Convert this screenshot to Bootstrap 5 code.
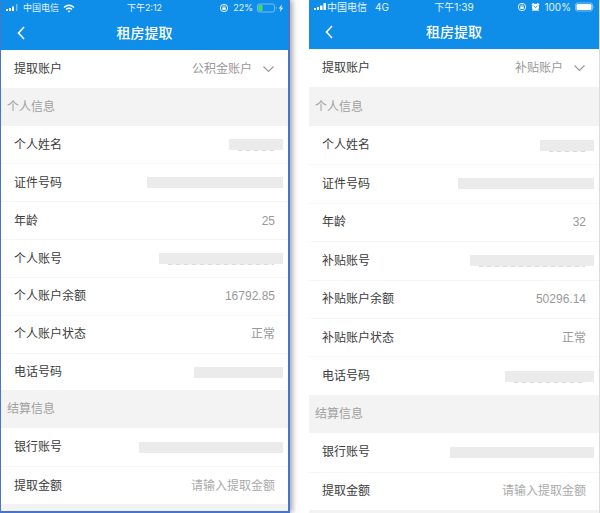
<!DOCTYPE html>
<html lang="zh-CN">
<head>
<meta charset="utf-8">
<meta name="viewport" content="width=device-width, initial-scale=1">
<title>租房提取</title>
<link href="https://cdn.jsdelivr.net/npm/bootstrap@5.3.0/dist/css/bootstrap.min.css" rel="stylesheet">
<style>
  body { font-family: "Liberation Sans", "Noto Sans CJK SC", sans-serif; font-size: 12px; line-height: 18px; color: #3c3c3c; background: #fff; }
  .screens { display: grid; grid-template-columns: 290fr 291fr; gap: 19px; }
  .phone { min-width: 0; background: #f3f3f3; padding-bottom: 3px; }
  .phone-framed { border: solid #4676cc; border-width: 0 2px 2px 1px; padding-bottom: 7px; box-shadow: 2px 0 6px rgba(0, 0, 0, .4); }
  .phone-plain { border-right: 1px solid #dcdcdc; }
  .topbar { background: #0f8ee9; color: #fff; }
  .status { display: grid; grid-template-columns: 1fr auto 1fr; align-items: center; height: 16px; padding: 0 4px; font-family: Inter, "Noto Sans CJK SC", sans-serif; font-size: 9px; line-height: 14px; color: #e6f4ff; }
  .phone-plain .status { height: 14px; font-size: 10px; }
  .titlebar { display: grid; grid-template-columns: 1fr auto 1fr; align-items: center; height: 34px; }
  .phone-plain .titlebar { height: 35px; }
  .titlebar h1 { font-size: 14px; line-height: 20px; font-weight: 500; }
  .back { justify-self: start; background: none; border: 0; padding: 0 0 0 16px; color: #fff; line-height: 1; }
  .field { flex: 1 0 36px; background: #fff; padding: 0 13px; }
  .field + .field { border-top: 1px solid #f6f6f6; }
  .section-title { flex: 1 0 36px; padding: 0 6px; font-size: 12px; line-height: 18px; font-weight: 400; color: #a0a0a0; }
  .val { color: #999; }
  .picker { gap: 10px; }
  .picker select, .amount { appearance: none; border: 0; background: none; padding: 0; color: #999; font: inherit; text-align: right; }
  .picker select { text-align-last: right; }
  .amount { width: 120px; }
  .amount::placeholder { color: #aaa; opacity: 1; }
  .redacted { height: 11px; background: #ebebeb; margin-right: -8px; }
  .trace { padding: 11px 9px 0; }
  .trace::after { content: ""; display: block; height: 1px; background: repeating-linear-gradient(90deg, #dadada 0 4px, #f4f4f4 4px 8px); }
  .w-name { width: 54px; }
  .w-id { width: 136px; }
  .w-account { width: 124px; }
  .w-phone { width: 89px; }
  .w-bank { width: 144px; }
</style>
<script src="https://cdn.jsdelivr.net/npm/bootstrap@5.3.0/dist/js/bootstrap.bundle.min.js"></script>
</head>
<body>
<main class="screens min-vh-100">

  <section class="phone phone-framed d-flex flex-column">
    <header class="topbar">
      <div class="status">
        <div class="d-flex align-items-center">
          <svg width="14" height="8" viewBox="0 0 14 8" fill="#fff" aria-hidden="true"><rect x="1" y="5" width="2" height="2"/><rect x="4" y="4" width="2" height="3"/><rect x="7" y="2.500" width="2" height="4.500"/><rect x="11" y="0" width="1.500" height="7" opacity=".4"/></svg>
          <span class="ms-1">中国电信</span>
          <svg class="ms-1" width="12" height="9" viewBox="0 0 12 9" fill="none" stroke="#fff" stroke-width="1.500" aria-hidden="true"><path d="M1 3.500Q6-1 11 3.500M3 5.500Q6 3 9 5.500"/><path d="M4.500 7Q6 6 7.500 7L6 8.500Z" fill="#fff" stroke="none"/></svg>
        </div>
        <span>下午2:12</span>
        <div class="d-flex align-items-center justify-content-end">
          <svg class="me-1" width="10" height="10" viewBox="0 0 10 10" fill="none" stroke="#fff" aria-hidden="true"><circle cx="5" cy="5" r="3.700" stroke-width=".9"/><path d="M3.300 4.700h3.400v2.200H3.300z" fill="#fff" stroke="none"/><path d="M4 5V3.800a1 1 0 0 1 2 0V5" stroke-width=".7"/></svg>
          <span>22%</span>
          <svg class="ms-1" width="27" height="10" viewBox="0 0 27 10" aria-hidden="true"><rect x=".5" y="1" width="17" height="8" rx="2" fill="none" stroke="#8acbfb" stroke-width=".8"/><rect x="1.500" y="2" width="4" height="6" rx="1" fill="#4cdb62"/><path d="M19 3.500v3q1.500-1.500 0-3" fill="#8acbfb"/><path d="M25 1.500 21.800 5.600h2L22.900 9l3.200-4.300h-2z" fill="#fff"/></svg>
        </div>
      </div>
      <div class="titlebar">
        <button type="button" class="back" aria-label="返回"><svg width="8" height="14" viewBox="0 0 8 14" fill="none" stroke="#fff" stroke-width="1.600" aria-hidden="true"><path d="M7 1 1.500 7 7 13"/></svg></button>
        <h1 class="m-0">租房提取</h1>
      </div>
    </header>
    <div class="field d-flex align-items-center justify-content-between">
      <label for="accountA">提取账户</label>
      <div class="picker d-flex align-items-center"><select id="accountA"><option>公积金账户</option></select><svg width="13" height="8" viewBox="0 0 13 8" fill="none" stroke="#999" stroke-width="1.200" aria-hidden="true"><path d="M1.500 1.500 6.500 6.500 11.500 1.500"/></svg></div>
    </div>
    <h2 class="section-title d-flex align-items-center m-0">个人信息</h2>
    <div class="field d-flex align-items-center justify-content-between"><span>个人姓名</span><span class="redacted trace w-name"></span></div>
    <div class="field d-flex align-items-center justify-content-between"><span>证件号码</span><span class="redacted w-id"></span></div>
    <div class="field d-flex align-items-center justify-content-between"><span>年龄</span><span class="val">25</span></div>
    <div class="field d-flex align-items-center justify-content-between"><span>个人账号</span><span class="redacted trace w-account"></span></div>
    <div class="field d-flex align-items-center justify-content-between"><span>个人账户余额</span><span class="val">16792.85</span></div>
    <div class="field d-flex align-items-center justify-content-between"><span>个人账户状态</span><span class="val">正常</span></div>
    <div class="field d-flex align-items-center justify-content-between"><span>电话号码</span><span class="redacted w-phone"></span></div>
    <h2 class="section-title d-flex align-items-center m-0">结算信息</h2>
    <div class="field d-flex align-items-center justify-content-between"><span>银行账号</span><span class="redacted w-bank"></span></div>
    <div class="field d-flex align-items-center justify-content-between"><label for="amountA">提取金额</label><input id="amountA" class="amount" type="text" inputmode="decimal" placeholder="请输入提取金额"></div>
  </section>

  <section class="phone phone-plain d-flex flex-column">
    <header class="topbar">
      <div class="status">
        <div class="d-flex align-items-center">
          <svg width="14" height="8" viewBox="0 0 14 8" fill="#fff" aria-hidden="true"><rect x="1" y="5" width="2" height="2"/><rect x="4" y="4" width="2" height="3"/><rect x="7" y="2.500" width="2.500" height="4.500"/><rect x="10.500" y="0" width="2.500" height="7"/></svg>
          <span>中国电信</span>
          <span class="ms-2">4G</span>
        </div>
        <span>下午1:39</span>
        <div class="d-flex align-items-center justify-content-end">
          <svg width="10" height="10" viewBox="0 0 10 10" fill="none" stroke="#fff" aria-hidden="true"><circle cx="5" cy="5" r="3.700" stroke-width=".9"/><path d="M3.300 4.700h3.400v2.200H3.300z" fill="#fff" stroke="none"/><path d="M4 5V3.800a1 1 0 0 1 2 0V5" stroke-width=".7"/></svg>
          <svg class="mx-1" width="9" height="10" viewBox="0 0 9 10" aria-hidden="true"><circle cx="4.500" cy="5.300" r="3.500" fill="#fff"/><path d="M.8 3 2.800 1.300M8.200 3 6.200 1.300M2.300 8 1.500 9M6.700 8 7.500 9" stroke="#fff" stroke-width="1.200"/><path d="M2.800 4 4.500 5.700 6.300 3.800" fill="none" stroke="#0f8ee9" stroke-width=".9"/></svg>
          <span>100%</span>
          <svg class="ms-1" width="20" height="10" viewBox="0 0 20 10" aria-hidden="true"><rect x=".5" y="1" width="17" height="8" rx="2" fill="none" stroke="#8acbfb" stroke-width=".8"/><rect x="1.500" y="2" width="15" height="6" rx="1" fill="#fff"/><path d="M18.500 3.500v3q1.500-1.500 0-3" fill="#8acbfb"/></svg>
        </div>
      </div>
      <div class="titlebar">
        <button type="button" class="back" aria-label="返回"><svg width="8" height="14" viewBox="0 0 8 14" fill="none" stroke="#fff" stroke-width="1.600" aria-hidden="true"><path d="M7 1 1.500 7 7 13"/></svg></button>
        <h1 class="m-0">租房提取</h1>
      </div>
    </header>
    <div class="field d-flex align-items-center justify-content-between">
      <label for="accountB">提取账户</label>
      <div class="picker d-flex align-items-center"><select id="accountB"><option>补贴账户</option></select><svg width="13" height="8" viewBox="0 0 13 8" fill="none" stroke="#999" stroke-width="1.200" aria-hidden="true"><path d="M1.500 1.500 6.500 6.500 11.500 1.500"/></svg></div>
    </div>
    <h2 class="section-title d-flex align-items-center m-0">个人信息</h2>
    <div class="field d-flex align-items-center justify-content-between"><span>个人姓名</span><span class="redacted trace w-name"></span></div>
    <div class="field d-flex align-items-center justify-content-between"><span>证件号码</span><span class="redacted w-id"></span></div>
    <div class="field d-flex align-items-center justify-content-between"><span>年龄</span><span class="val">32</span></div>
    <div class="field d-flex align-items-center justify-content-between"><span>补贴账号</span><span class="redacted trace w-account"></span></div>
    <div class="field d-flex align-items-center justify-content-between"><span>补贴账户余额</span><span class="val">50296.14</span></div>
    <div class="field d-flex align-items-center justify-content-between"><span>补贴账户状态</span><span class="val">正常</span></div>
    <div class="field d-flex align-items-center justify-content-between"><span>电话号码</span><span class="redacted trace w-phone"></span></div>
    <h2 class="section-title d-flex align-items-center m-0">结算信息</h2>
    <div class="field d-flex align-items-center justify-content-between"><span>银行账号</span><span class="redacted w-bank"></span></div>
    <div class="field d-flex align-items-center justify-content-between"><label for="amountB">提取金额</label><input id="amountB" class="amount" type="text" inputmode="decimal" placeholder="请输入提取金额"></div>
  </section>

</main>
</body>
</html>
